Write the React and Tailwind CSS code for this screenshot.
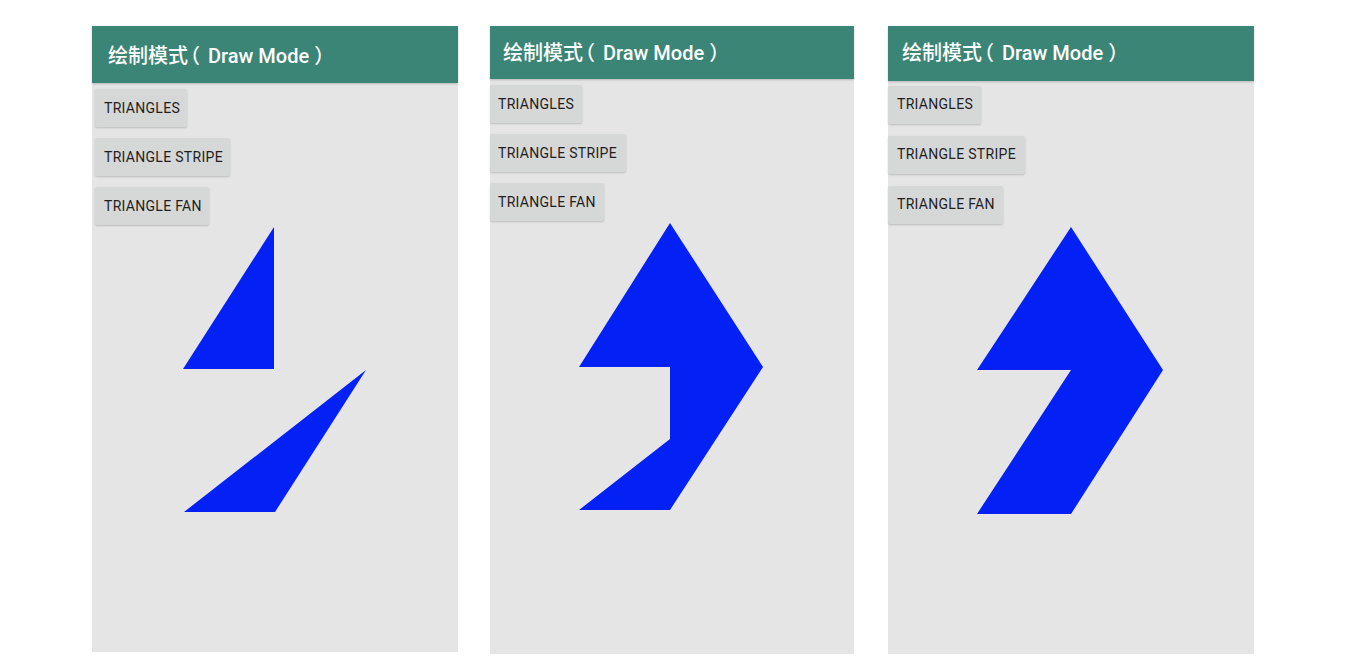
import React from "react";

const font = { fontFamily: '"Roboto", "Noto Sans CJK SC", sans-serif' };

const Btn = ({ label, className }) => (
  <button
    className={`h-[38px] text-left text-[14px] font-normal tracking-[0.3px] text-[#1e1e1e] bg-[#d6d7d7] rounded-[2px] shadow-[0_1px_2px_rgba(0,0,0,0.18)] ${className}`}
  >
    {label}
  </button>
);

const Panel = ({ panelClass, headerClass, btnClasses, btnCol, children }) => (
  <div className={`flex flex-col bg-[#e5e5e5] ${panelClass}`}>
    <div className={`flex items-center bg-[#3a8576] text-white text-[20px] font-medium shadow-[0_1px_2px_rgba(0,0,0,0.2)] ${headerClass}`}>
      <span>
        绘制模式
        <span className="inline-block [font-feature-settings:'halt'] pl-[2px] pr-[8px]">（</span>
        Draw Mode
        <span className="inline-block [font-feature-settings:'halt'] pl-[5px] pr-[5px]">）</span>
      </span>
    </div>
    <div className={`flex flex-col items-start ${btnCol}`}>
      <Btn label="TRIANGLES" className={btnClasses[0]} />
      <Btn label="TRIANGLE STRIPE" className={btnClasses[1]} />
      <Btn label="TRIANGLE FAN" className={btnClasses[2]} />
    </div>
    {children}
  </div>
);

export default function App() {
  return (
    <div className="w-[1348px] h-[672px] bg-white flex items-start pt-[26px] pl-[92px]" style={font}>
      <Panel
        panelClass="w-[366px] h-[626px]"
        headerClass="h-[57px] pl-[16px] pt-[3px]"
        btnCol="pt-[6px] pl-[3px] gap-[11px]"
        btnClasses={["w-[92px] pl-[9px]", "w-[135px] pl-[9px]", "w-[114px] pl-[9px]"]}
      >
        <svg width="366" height="427" className="block">
          <polygon points="182,2 91,144 182,144" fill="#0321f5" />
          <polygon points="274,145 92,287 183,287" fill="#0321f5" />
        </svg>
      </Panel>

      <Panel
        panelClass="w-[364px] h-[628px] ml-[32px]"
        headerClass="h-[53px] pl-[13px]"
        btnCol="pt-[6px] gap-[11px]"
        btnClasses={["w-[92px] pl-[8px]", "w-[136px] pl-[8px]", "w-[114px] pl-[8px]"]}
      >
        <svg width="364" height="433" className="block">
          <polygon points="180,2 273,146 180,289 89,289 180,218 180,146 89,146" fill="#0321f5" />
        </svg>
      </Panel>

      <Panel
        panelClass="w-[366px] h-[628px] ml-[34px]"
        headerClass="h-[55px] pl-[14px]"
        btnCol="pt-[5px] gap-[12px]"
        btnClasses={["w-[93px] pl-[9px]", "w-[137px] pl-[9px]", "w-[115px] pl-[9px]"]}
      >
        <svg width="366" height="431" className="block">
          <polygon points="183,3 275,146 183,290 89,290 183,146 89,146" fill="#0321f5" />
        </svg>
      </Panel>
    </div>
  );
}
